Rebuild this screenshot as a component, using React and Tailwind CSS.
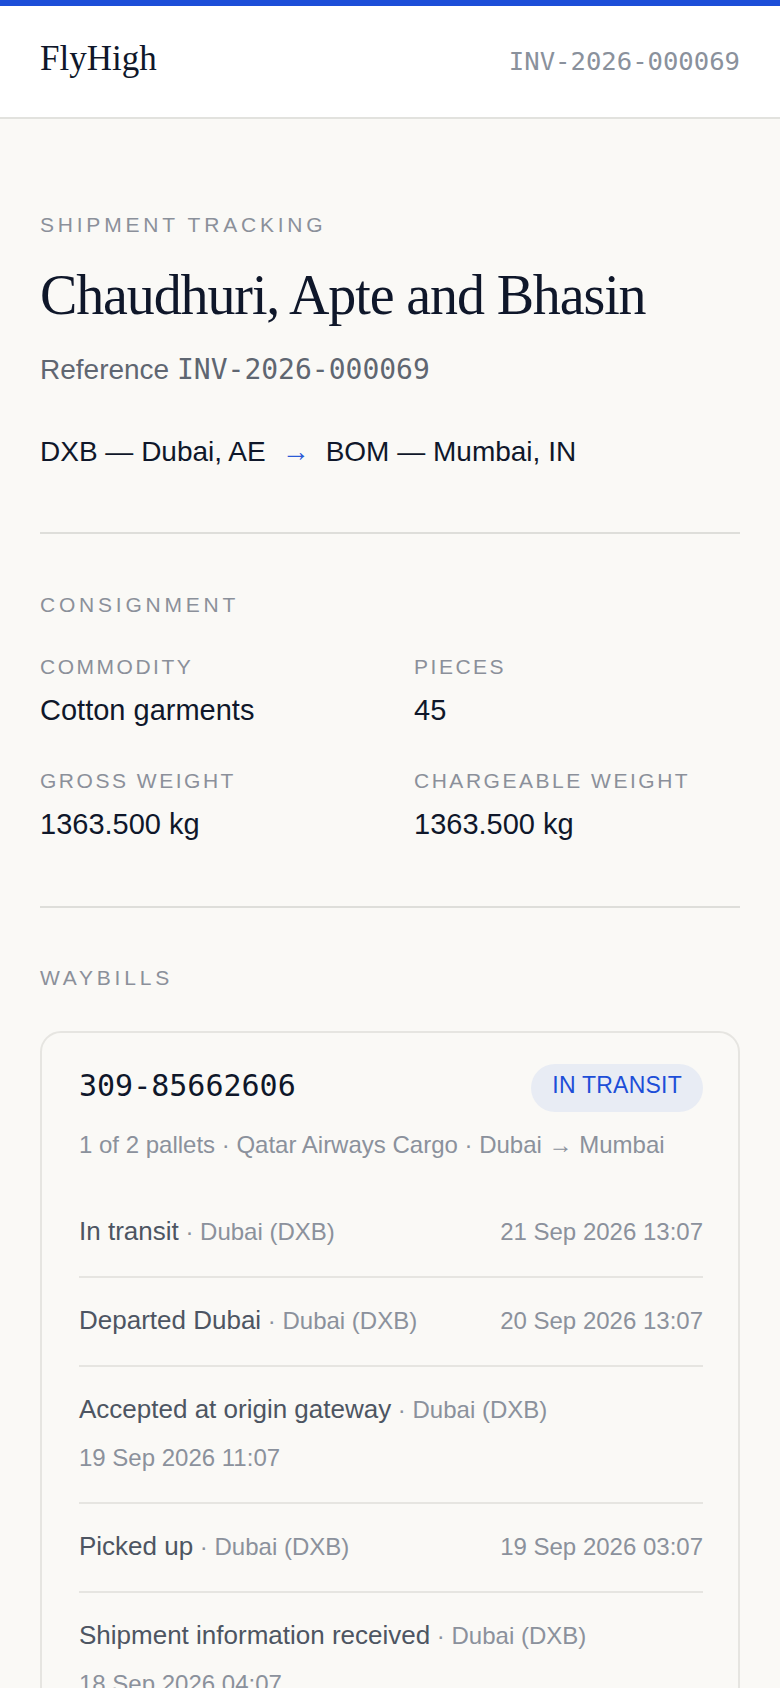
import React from 'react';

const sans = "font-['Liberation_Sans',Arial,sans-serif]";
const mono = "font-['DejaVu_Sans_Mono',monospace]";
const serif = "font-['Liberation_Serif','Times_New_Roman',serif]";

const waybills = [
  {
    id: '309-85662606',
    status: 'IN TRANSIT',
    meta: '1 of 2 pallets · Qatar Airways Cargo · Dubai → Mumbai',
    events: [
      { title: 'In transit', place: 'Dubai (DXB)', at: '21 Sep 2026 13:07' },
      { title: 'Departed Dubai', place: 'Dubai (DXB)', at: '20 Sep 2026 13:07' },
      { title: 'Accepted at origin gateway', place: 'Dubai (DXB)', at: '19 Sep 2026 11:07' },
      { title: 'Picked up', place: 'Dubai (DXB)', at: '19 Sep 2026 03:07' },
      { title: 'Shipment information received', place: 'Dubai (DXB)', at: '18 Sep 2026 04:07' },
    ],
  },
];

const Label = ({ children, className = '' }) => (
  <p className={`text-[21px] leading-[28px] uppercase text-[#8b909a] ${className}`}>{children}</p>
);

const Field = ({ label, value }) => (
  <div>
    <Label className="tracking-[0.12em]">{label}</Label>
    <p className="mt-[9px] text-[29px] leading-[40px] text-[#0f172a]">{value}</p>
  </div>
);

const App = () => {
  return (
    <div className={`min-h-screen bg-[#faf9f6] ${sans}`}>
      <div className="h-[6px] bg-[#1d4ed8]" />

      {/* Header */}
      <header className="h-[113px] bg-white border-b-2 border-[#e2e2de] px-10 pt-[32px] flex items-baseline justify-between">
        <span className={`${serif} text-[35px] leading-[42px] text-[#0f172a]`}>FlyHigh</span>
        <span className={`${mono} text-[25.6px] leading-[36px] text-[#8a919c]`}>INV-2026-000069</span>
      </header>

      <main className="px-10 pt-[92px] pb-16">
        {/* Title block */}
        <Label className="tracking-[0.18em]">Shipment Tracking</Label>
        <h1 className={`${serif} mt-[25px] text-[56px] leading-[62px] tracking-[-0.02em] text-[#0f172a]`}>
          Chaudhuri, Apte and Bhasin
        </h1>
        <p className="mt-[24px] text-[28px] leading-[40px] text-[#5f6671]">
          Reference <span className={mono}>INV-2026-000069</span>
        </p>
        <p className="mt-[42px] flex items-baseline gap-4 text-[28px] leading-[40px] text-[#0f172a]">
          <span>DXB — Dubai, AE</span>
          <span className="text-[#2b5bd6]">→</span>
          <span>BOM — Mumbai, IN</span>
        </p>

        <div className="mt-[60px] h-[2px] bg-[#dededa]" />

        {/* Consignment */}
        <Label className="mt-[57px] tracking-[0.18em]">Consignment</Label>
        <div className="mt-[34px] grid grid-cols-2 gap-x-12 gap-y-[37px]">
          <Field label="Commodity" value="Cotton garments" />
          <Field label="Pieces" value="45" />
          <Field label="Gross weight" value="1363.500 kg" />
          <Field label="Chargeable weight" value="1363.500 kg" />
        </div>

        <div className="mt-[62px] h-[2px] bg-[#dededa]" />

        {/* Waybills */}
        <Label className="mt-[56px] tracking-[0.18em]">Waybills</Label>
        <div className="mt-[39px] flex flex-col gap-8">
          {waybills.map((wb) => (
            <div key={wb.id} className="rounded-[21px] border-2 border-[#e6e5e1] pl-[37px] pr-[35px] pt-[31px] pb-[28px]">
              <div className="flex items-start justify-between">
                <span className={`${mono} text-[30px] leading-[43px] text-[#0f172a]`}>{wb.id}</span>
                <span className="h-[48px] rounded-full bg-[#e8ecf4] px-[21px] pt-[4px] text-[23px] leading-[34px] tracking-[0.01em] text-[#1d4ed8]">
                  {wb.status}
                </span>
              </div>
              <p className="mt-[16px] text-[24px] leading-[34px] text-[#8b919c]">{wb.meta}</p>

              <ul className="mt-[27px]">
                {wb.events.map((ev, i) => (
                  <li
                    key={i}
                    className={`flex flex-wrap items-baseline justify-between gap-x-4 gap-y-4 pt-[25px] pb-[28px] ${
                      i > 0 ? 'border-t-2 border-[#e6e5e1]' : ''
                    }`}
                  >
                    <span className="text-[26px] leading-[34px] text-[#4d5562]">
                      {ev.title}
                      <span className="text-[24px] leading-none text-[#8b919c]"> · {ev.place}</span>
                    </span>
                    <span className="text-[24px] leading-[32px] text-[#8b919c]">{ev.at}</span>
                  </li>
                ))}
              </ul>
            </div>
          ))}
        </div>
      </main>
    </div>
  );
};

export default App;
